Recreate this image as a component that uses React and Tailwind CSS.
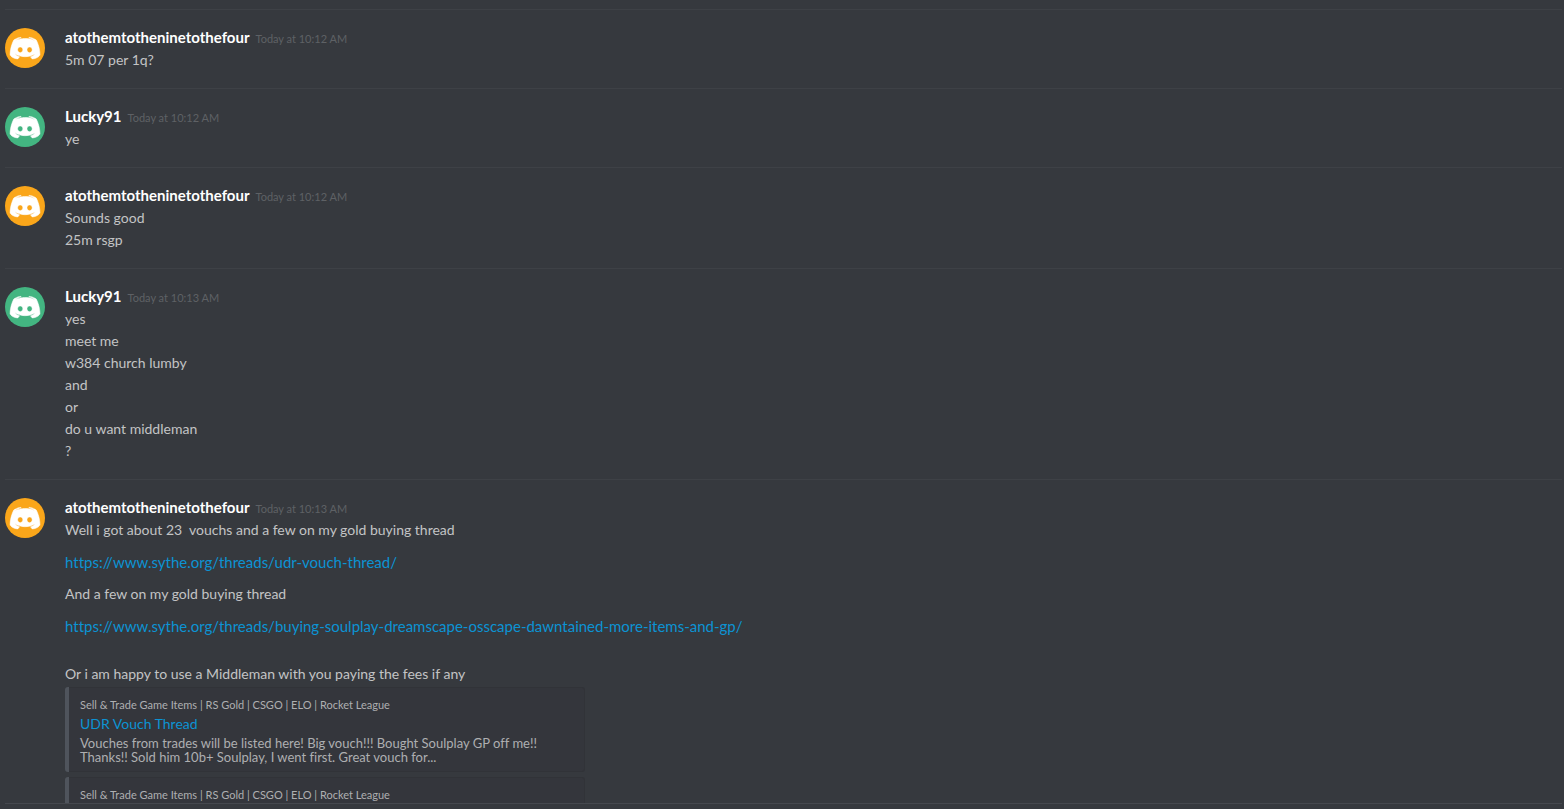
import React from 'react';

const GROUPS = [
  { user: 'atothemtotheninetothefour', color: 'orange', time: 'Today at 10:12 AM', lines: ['5m 07 per 1q?'] },
  { user: 'Lucky91', color: 'green', time: 'Today at 10:12 AM', lines: ['ye'] },
  { user: 'atothemtotheninetothefour', color: 'orange', time: 'Today at 10:12 AM', lines: ['Sounds good', '25m rsgp'] },
  {
    user: 'Lucky91',
    color: 'green',
    time: 'Today at 10:13 AM',
    lines: ['yes', 'meet me', 'w384 church lumby', 'and', 'or', 'do u want middleman', '?'],
  },
];

const PROVIDER = 'Sell & Trade Game Items | RS Gold | CSGO | ELO | Rocket League';

function Avatar({ color }) {
  return (
    <div className={`size-10 shrink-0 overflow-hidden rounded-full ${color === 'orange' ? 'bg-[#faa61a]' : 'bg-[#43b581]'}`}>
      <svg viewBox="45 30 156 156" className="size-10 fill-white stroke-white" strokeWidth="2" aria-hidden="true">
        <path
          fillRule="evenodd"
          d="M150.9 150.6s-3.6-4.3-6.6-8.1c13.1-3.7 18.1-11.9 18.1-11.9-4.1 2.7-8 4.6-11.5 5.9-5 2.1-9.8 3.5-14.5 4.3-9.6 1.8-18.4 1.3-25.9-.1-5.7-1.1-10.6-2.7-14.7-4.3-2.3-.9-4.8-2-7.3-3.4-.3-.2-.6-.3-.9-.5-.2-.1-.3-.2-.4-.3-1.8-1-2.8-1.7-2.8-1.7s4.8 8 17.5 11.8c-3 3.8-6.7 8.3-6.7 8.3-22.1-.7-30.5-15.2-30.5-15.2 0-32.2 14.4-58.3 14.4-58.3 14.4-10.8 28.1-10.5 28.1-10.5l1 1.2c-18 5.2-26.3 13.1-26.3 13.1s2.2-1.2 5.9-2.9c10.7-4.7 19.2-6 22.7-6.3.6-.1 1.1-.2 1.7-.2 6.1-.8 13-1 20.2-.2 9.5 1.1 19.7 3.9 30.1 9.6 0 0-7.9-7.5-24.9-12.7l1.4-1.6s13.7-.3 28.1 10.5c0 0 14.4 26.1 14.4 58.3 0 0-8.5 14.5-30.6 15.2z M104.4 103.9c-5.7 0-10.2 5-10.2 11.1s4.6 11.1 10.2 11.1c5.7 0 10.2-5 10.2-11.1.1-6.1-4.5-11.1-10.2-11.1z M140.9 103.9c-5.7 0-10.2 5-10.2 11.1s4.6 11.1 10.2 11.1c5.7 0 10.2-5 10.2-11.1s-4.5-11.1-10.2-11.1z"
        />
      </svg>
    </div>
  );
}

function Group({ user, color, time, children }) {
  return (
    <article className="mr-0.5 ml-1 flex shrink-0 gap-5 border-t border-[#3e4146] pt-[18px] pb-[17px]">
      <Avatar color={color} />
      <div className="min-w-0 flex-1">
        <h2 className="flex h-[21px] items-baseline gap-1.5">
          <span className="text-[15px] leading-[18px] font-bold text-white">{user}</span>
          <time className="text-[11px] leading-[18px] text-[#5e6165]">{time}</time>
        </h2>
        {children}
      </div>
    </article>
  );
}

function Link({ href }) {
  return (
    <a href={href} className="block w-fit text-[15px] leading-[22px] text-[#0c93d3] hover:underline">
      {href}
    </a>
  );
}

function Embed({ children }) {
  return (
    <div className="flex max-w-[520px]">
      <div className="w-1 shrink-0 rounded-l-[3px] bg-[#4f545c]" />
      <div className="min-w-0 flex-1 rounded-r-[3px] border border-l-0 border-[#313338] bg-[#34363c] pt-2 pr-8 pb-[7px] pl-[11px]">
        <div className="text-[11px] leading-[18px] text-[#aeafb1]">{PROVIDER}</div>
        {children}
      </div>
    </div>
  );
}

export default function App() {
  return (
    <div className="flex h-screen flex-col bg-[#36393e] font-['Lato','Noto_Sans',sans-serif] text-sm leading-[22px] text-[#c3c4c5] [font-variant-ligatures:none]">
      <main className="flex min-h-0 flex-1 flex-col overflow-hidden pt-[9px] pl-px">
        {GROUPS.map((g, i) => (
          <Group key={i} {...g}>
            {g.lines.map((line) => (
              <p key={line} className="leading-[22px]">{line}</p>
            ))}
          </Group>
        ))}
        <Group user="atothemtotheninetothefour" color="orange" time="Today at 10:13 AM">
          <div className="flex flex-col gap-2.5 leading-[22px]">
            <p className="whitespace-pre-wrap">{'Well i got about 23  vouchs and a few on my gold buying thread'}</p>
            <Link href="https://www.sythe.org/threads/udr-vouch-thread/" />
            <p>And a few on my gold buying thread</p>
            <Link href="https://www.sythe.org/threads/buying-soulplay-dreamscape-osscape-dawntained-more-items-and-gp/" />
            <p className="pt-4">Or i am happy to use a Middleman with you paying the fees if any</p>
          </div>
          <div className="mt-0.5 flex flex-col gap-[5px]">
            <Embed>
              <a href="https://www.sythe.org/threads/udr-vouch-thread/" className="block w-fit text-sm leading-5 text-[#0c93d3] hover:underline">
                UDR Vouch Thread
              </a>
              <p className="pt-0.5 text-[13px] leading-[14px] text-[#aeafb1]">
                Vouches from trades will be listed here! Big vouch!!! Bought Soulplay GP off me!! Thanks!! Sold him 10b+ Soulplay, I went first. Great vouch for...
              </p>
            </Embed>
            <Embed />
          </div>
        </Group>
      </main>
      <footer className="mr-0.5 ml-[5px] h-1.5 shrink-0 border-t border-[#45484e]" />
    </div>
  );
}
